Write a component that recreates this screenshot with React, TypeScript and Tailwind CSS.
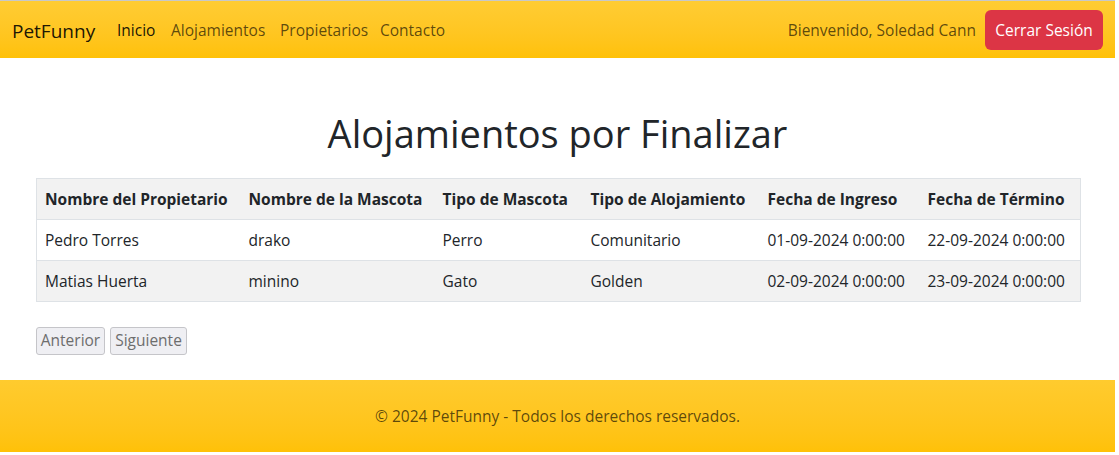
const rows = [
  ['Pedro Torres', 'drako', 'Perro', 'Comunitario', '01-09-2024 0:00:00', '22-09-2024 0:00:00'],
  ['Matias Huerta', 'minino', 'Gato', 'Golden', '02-09-2024 0:00:00', '23-09-2024 0:00:00'],
];

const headers = [
  'Nombre del Propietario',
  'Nombre de la Mascota',
  'Tipo de Mascota',
  'Tipo de Alojamiento',
  'Fecha de Ingreso',
  'Fecha de Término',
];

const colWidths = [204, 194, 148, 177, 160, 161];

export default function App() {
  return (
    <div
      className="w-[1115px] bg-white text-[#212529] border-t border-[#c8c8c8]"
      style={{ fontFamily: '"Open Sans", "Noto Sans", sans-serif' }}
    >
      {/* Navbar */}
      <nav className="h-[57px] flex items-center justify-between pl-3 pr-3 bg-gradient-to-b from-[#ffcc33] to-[#ffc107]">
        <div className="flex items-center pt-[3px]">
          <span className="text-[19px] text-black/90 w-[105px]">PetFunny</span>
          <div className="flex items-center text-[15.5px]">
            <span className="w-[54px] text-black/90">Inicio</span>
            <span className="w-[109px] text-black/65">Alojamientos</span>
            <span className="w-[100px] text-black/65">Propietarios</span>
            <span className="w-[80px] text-black/65">Contacto</span>
          </div>
        </div>
        <div className="flex items-center">
          <span className="text-[15.5px] text-black/65 mr-[9px] pt-[3px]">Bienvenido, Soledad Cann</span>
          <button className="h-[40px] w-[118px] rounded-[6px] bg-[#dc3545] text-white text-[15.5px] pt-[2px]">
            Cerrar Sesión
          </button>
        </div>
      </nav>

      {/* Main */}
      <main className="px-[36px] pt-[52px] pb-[25px]">
        <h1 className="text-center text-[38px] leading-[46px] font-normal mb-[22px]">
          Alojamientos por Finalizar
        </h1>
        <table className="w-[1044px] table-fixed border-collapse border border-[#dee2e6] text-[15.5px]">
          <colgroup>
            {colWidths.map((w, i) => (
              <col key={i} style={{ width: w }} />
            ))}
          </colgroup>
          <thead>
            <tr className="h-[41px] bg-[#f2f2f2]">
              {headers.map((h) => (
                <th key={h} className="text-left font-bold px-2 pt-[2px] border-b border-[#dee2e6] whitespace-nowrap">
                  {h}
                </th>
              ))}
            </tr>
          </thead>
          <tbody>
            {rows.map((r, i) => (
              <tr key={i} className={`h-[41px] ${i % 2 === 1 ? 'bg-[#f2f2f2]' : 'bg-white'}`}>
                {r.map((c, j) => (
                  <td key={j} className="px-2 pt-[2px] border-b border-[#dee2e6] whitespace-nowrap">
                    {c}
                  </td>
                ))}
              </tr>
            ))}
          </tbody>
        </table>
        <div className="flex gap-[5px] mt-[25px]">
          <button
            disabled
            className="h-[28px] w-[69px] rounded-[3px] border border-[#c5c5c9] bg-[#efeff3] text-[#6d6d6d] text-[15.5px]"
          >
            Anterior
          </button>
          <button
            disabled
            className="h-[28px] w-[77px] rounded-[3px] border border-[#c5c5c9] bg-[#efeff3] text-[#6d6d6d] text-[15.5px]"
          >
            Siguiente
          </button>
        </div>
      </main>

      {/* Footer */}
      <footer className="h-[72px] flex items-center justify-center pt-[2px] bg-gradient-to-b from-[#ffcb2e] to-[#ffc107]">
        <span className="text-[15.5px] text-black/65">© 2024 PetFunny - Todos los derechos reservados.</span>
      </footer>
    </div>
  );
}
